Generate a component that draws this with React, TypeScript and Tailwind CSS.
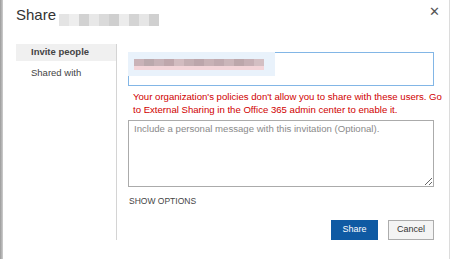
import React from 'react';

const Blur: React.FC<{ cells: string[]; h: string }> = ({ cells, h }) => (
  <span className={`inline-flex ${h} blur-[0.6px]`}>
    {cells.map((c, i) => (
      <span key={i} className="w-[10px] h-full" style={{ background: c }} />
    ))}
  </span>
);

const App: React.FC = () => {
  return (
    <div className="w-[450px] h-[259px] flex bg-white text-[#333] font-['Liberation_Sans',Arial,sans-serif] overflow-hidden">
      <div className="w-[3px] h-full bg-gradient-to-r from-[#9a9a9a] to-[#cfcfcf]"></div>

      <div className="flex-1 flex flex-col border-r border-[#dcdcdc]">
        <div className="flex justify-between items-start pl-[13px] pr-[9px] pt-[5px] h-[44px] shrink-0">
          <div className="flex items-start gap-[3px]">
            <span className="text-[15px] leading-[20px] text-[#333]">Share</span>
            <span className="mt-[4px]">
              <Blur
                h="h-[12px]"
                cells={['#e4e4e4', '#eeeeee', '#d2d2d2', '#e8e8e8', '#dadada', '#cfcfcf', '#ececec', '#d4d4d4', '#e6e6e6', '#d0d0d0']}
              />
            </span>
          </div>
          <span className="text-[13px] leading-[13px] text-[#555]">✕</span>
        </div>

        <div className="flex">
          <div className="w-[100px] pl-[13px] box-content flex flex-col">
            <div className="h-[17px] bg-[#f0f0f0] pl-[15px] flex items-center text-[9.5px] font-bold text-[#444]">
              Invite people
            </div>
            <div className="h-[24px] pl-[15px] flex items-center text-[9.5px] text-[#444]">Shared with</div>
          </div>

          <div className="border-l border-[#d4d4d4] pl-[11px] pt-[8px] w-[318px] h-[196px] flex flex-col">
            <div className="w-[306px] h-[34px] shrink-0 border border-[#82b6e6] flex items-start">
              <div className="w-[147px] h-[24px] -mt-px -ml-px bg-[#e9f2fb] flex flex-col justify-center pl-[6px]">
                <Blur
                  h="h-[7px]"
                  cells={['#c9b3b8', '#bba9ad', '#c7b2b7', '#bfa7ac', '#d2bcc0', '#c4afb3', '#bca6ab', '#c8b2b6', '#c0aaaf', '#cbb6ba', '#bca7ab', '#c6b0b5', '#d3bfc3']}
                />
                <span className="w-[130px] h-[4px] bg-[#f3d5d9] blur-[0.6px]"></span>
              </div>
            </div>
            <p className="shrink-0 whitespace-nowrap text-[#d00000] text-[9.6px] leading-[13px] pl-[5px] pt-[4px] w-[306px]">
              Your organization's policies don't allow you to share with these users. Go
              <br />
              to External Sharing in the Office 365 admin center to enable it.
            </p>
            <textarea
              className="shrink-0 mt-[4px] w-[306px] h-[67px] border border-[#ababab] px-[5px] py-[2px] text-[9.6px] leading-[12px] outline-none resize-y placeholder:text-[#8a8a8a]"
              placeholder="Include a personal message with this invitation (Optional)."
            />
            <div className="shrink-0 mt-[9px] pl-[1px] text-[8.5px] leading-[10px] text-[#444]">SHOW OPTIONS</div>
            <div className="shrink-0 mt-[14px] flex justify-end gap-[10px] w-[306px]">
              <button className="w-[47px] h-[20px] bg-[#0f5aa3] text-white text-[9px]">Share</button>
              <button className="w-[46px] h-[20px] bg-[#f4f4f4] border border-[#acacac] text-[#333] text-[9px]">Cancel</button>
            </div>
          </div>
        </div>
      </div>
    </div>
  );
};

export default App;
